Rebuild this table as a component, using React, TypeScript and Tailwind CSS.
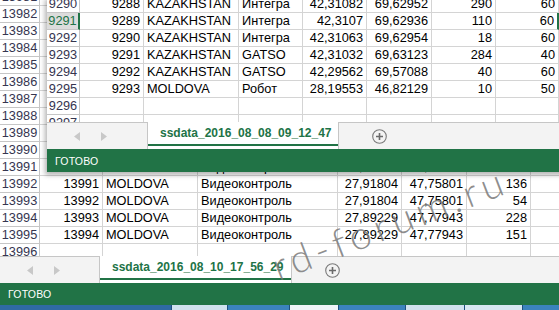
import { FC, ReactNode } from "react";

type Row = { n: number; cells: string[]; sel?: boolean };

const backCols = ["w-[63px]", "w-[95px]", "w-[140px]", "w-[64px]", "w-[65px]", "w-[64px]", "w-[64px]"];
const frontCols = ["w-[64px]", "w-[95px]", "w-[64px]", "w-[64px]", "w-[65px]", "w-[64px]", "w-[63px]", "w-[64px]"];
const rightAligned = [true, false, false, true, true, true, true, true];

const moldova = (a: string, d: string, e: string, f: string) => [a, "MOLDOVA", "Видеоконтроль", d, e, f, ""];

const backRows: Row[] = [
    { n: 13981, cells: moldova("13980", "27,91804", "47,75801", "131") },
    ...Array.from({ length: 9 }, (_, i) => ({
        n: 13982 + i,
        cells: moldova(String(13981 + i), "27,91804", "47,75801", "120"),
    })),
    { n: 13991, cells: moldova("13990", "27,91804", "47,75801", "131") },
    { n: 13992, cells: moldova("13991", "27,91804", "47,75801", "136") },
    { n: 13993, cells: moldova("13992", "27,91804", "47,75801", "54") },
    { n: 13994, cells: moldova("13993", "27,89229", "47,77943", "228") },
    { n: 13995, cells: moldova("13994", "27,89229", "47,77943", "151") },
    { n: 13996, cells: ["", "", "", "", "", "", ""] },
];

const frontRows: Row[] = [
    { n: 9290, cells: ["9288", "KAZAKHSTAN", "Интегра", "42,31082", "69,62952", "290", "60", ""] },
    { n: 9291, cells: ["9289", "KAZAKHSTAN", "Интегра", "42,3107", "69,62936", "110", "60", ""], sel: true },
    { n: 9292, cells: ["9290", "KAZAKHSTAN", "Интегра", "42,31063", "69,62954", "18", "60", ""] },
    { n: 9293, cells: ["9291", "KAZAKHSTAN", "GATSO", "42,31032", "69,63123", "284", "40", ""] },
    { n: 9294, cells: ["9292", "KAZAKHSTAN", "GATSO", "42,29562", "69,57088", "40", "60", ""] },
    { n: 9295, cells: ["9293", "MOLDOVA", "Робот", "28,19553", "46,82129", "10", "50", ""] },
    { n: 9296, cells: ["", "", "", "", "", "", "", ""] },
    { n: 9297, cells: ["", "", "", "", "", "", "", ""] },
    { n: 9298, cells: ["", "", "", "", "", "", "", ""] },
];

const GridRow: FC<{ row: Row; headW: string; cols: string[] }> = ({ row, headW, cols }) => (
    <div className="flex h-[17px] shrink-0">
        <div
            className={`${headW} shrink-0 border-b text-center ${
                row.sel
                    ? "bg-[#dcdcdc] text-[#217346] border-r-2 border-r-[#217346] border-b-[#c6c6c6]"
                    : "bg-white text-[#35354f] border-r border-[#c6c6c6]"
            }`}
        >
            {row.n}
        </div>
        {cols.map((w, i) => (
            <div
                key={i}
                className={`${w} shrink-0 overflow-hidden whitespace-nowrap border-b border-r border-[#d4d4d4] px-[3px] ${
                    rightAligned[i] ? "text-right" : "text-left"
                } ${row.sel && i === 6 ? "border-r-2 border-r-[#217346]" : ""}`}
            >
                {row.cells[i]}
            </div>
        ))}
    </div>
);

const Arrows: FC = () => (
    <div className="flex items-center gap-[21px] pl-[27px]">
        <svg width="6" height="9" viewBox="0 0 6 9">
            <polygon points="6,0 6,9 0,4.5" fill="#c8c8c8" />
        </svg>
        <svg width="6" height="9" viewBox="0 0 6 9">
            <polygon points="0,0 0,9 6,4.5" fill="#c8c8c8" />
        </svg>
    </div>
);

const PlusIcon: FC = () => (
    <svg width="15" height="15" viewBox="0 0 15 15">
        <circle cx="7.5" cy="7.5" r="6.8" fill="none" stroke="#7a7a7a" strokeWidth="1.1" />
        <path d="M7.5 4v7M4 7.5h7" stroke="#6a6a6a" strokeWidth="1.6" />
    </svg>
);

const TabBar: FC<{ leftW: string; tabW: string; name: string }> = ({ leftW, tabW, name }) => (
    <div className="flex h-[27px] shrink-0">
        <div className={`${leftW} shrink-0 flex items-center bg-[#f3f3f3] border-t border-r border-[#c6c6c6]`}>
            <Arrows />
        </div>
        <div className={`${tabW} shrink-0 flex flex-col bg-white`}>
            <div className="flex-1 flex items-center pl-[12px] text-[12px] font-bold text-[#217346] whitespace-nowrap">
                {name}
            </div>
            <div className="h-[2px] bg-[#217346]" />
            <div className="h-[3px]" />
        </div>
        <div className="flex-1 flex items-center bg-[#f3f3f3] border-t border-l border-[#c6c6c6] pl-[33px]">
            <PlusIcon />
        </div>
    </div>
);

const StatusBar: FC<{ h: string; pad: string }> = ({ h, pad }) => (
    <div className={`${h} ${pad} shrink-0 flex items-center bg-[#217346] text-white text-[10.5px] tracking-[0.2px]`}>
        ГОТОВО
    </div>
);

const Taskbar: FC = () => {
    const parts: [string, ReactNode][] = [
        ["w-[171px] bg-[#2f6aa3]", null],
        ["w-[55px] bg-[#cfe1ee]", null],
        ["w-[61px] bg-[#3b83bd]", null],
        ["w-[48px] bg-[#eef4f8]", null],
        ["w-[66px] bg-[#3b83bd]", null],
        ["w-[58px] bg-[#cfe1ee]", null],
        ["w-[57px] bg-[#d6e6f1]", null],
        ["flex-1 bg-[#3b83bd]", null],
    ];
    return (
        <div className="flex h-[5px] gap-[1px] bg-[#1d4f7e]">
            {parts.map(([c], i) => (
                <div key={i} className={c} />
            ))}
        </div>
    );
};

const App: FC = () => {
    return (
        <div className="relative w-[559px] h-[310px] overflow-hidden bg-white font-['Liberation_Sans',Arial,sans-serif] text-[12.75px] leading-[16px] text-black">
            {/* back window */}
            <div className="flex flex-col h-full">
                <div className="h-[256px] shrink-0 overflow-hidden">
                    <div className="-mt-[11px] flex flex-col">
                        {backRows.map((r) => (
                            <GridRow key={r.n} row={r} headW="w-[40px]" cols={backCols} />
                        ))}
                    </div>
                </div>
                <TabBar leftW="w-[100px]" tabW="w-[191px]" name="ssdata_2016_08_10_17_56_29" />
                <StatusBar h="h-[22px]" pad="pl-[8px]" />
                <Taskbar />
            </div>

            {/* front window */}
            <div className="absolute left-[47px] top-0 w-[540px] h-[172px] flex flex-col bg-white shadow-[0_1px_5px_2px_rgba(0,0,0,0.3)]">
                <div className="h-[122px] shrink-0 overflow-hidden">
                    <div className="-mt-[4px] flex flex-col">
                        {frontRows.map((r) => (
                            <GridRow key={r.n} row={r} headW="w-[33px]" cols={frontCols} />
                        ))}
                    </div>
                </div>
                <TabBar leftW="w-[101px]" tabW="w-[190px]" name="ssdata_2016_08_08_09_12_47" />
                <StatusBar h="h-[23px]" pad="pl-[8px]" />
            </div>

            {/* watermark */}
            <div className="absolute left-[280px] top-[247px] origin-bottom-left -rotate-[21deg] font-['Lato','Open_Sans',sans-serif] font-light text-[39px] leading-[38px] tracking-[5px] text-[#7a7a7a]/85 whitespace-nowrap pointer-events-none">
                rd-forum.ru
            </div>
        </div>
    );
};

export default App;
